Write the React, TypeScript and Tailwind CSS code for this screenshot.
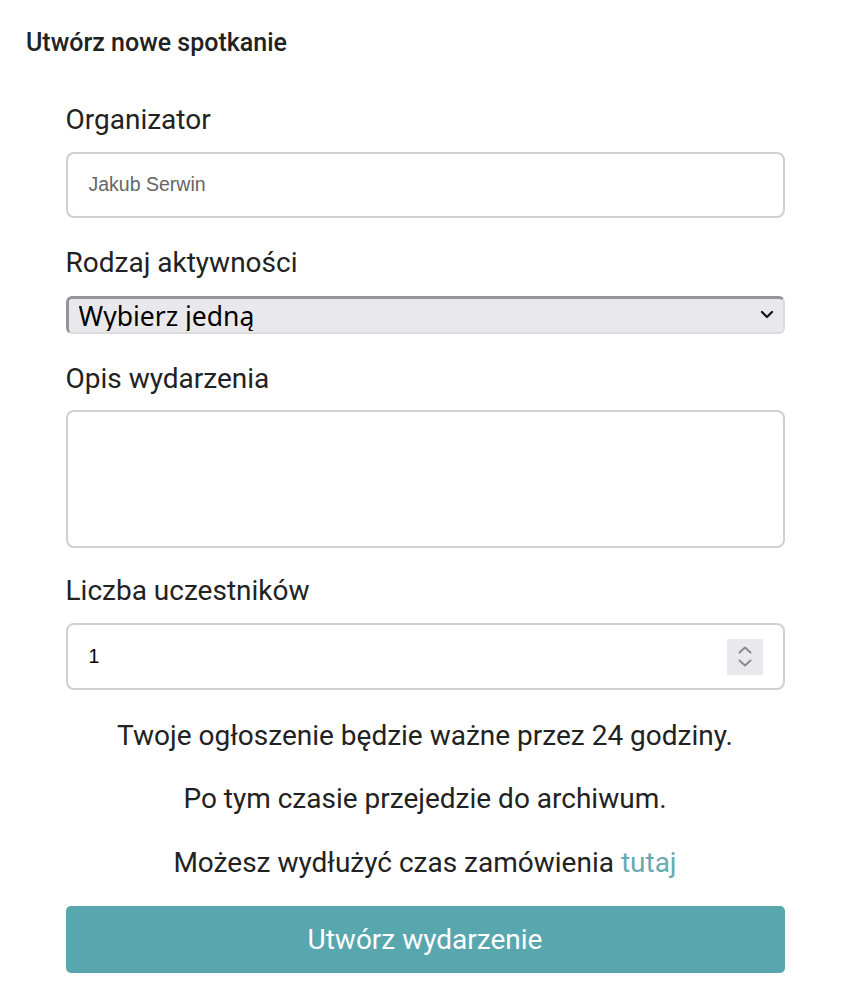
import React from "react";

const roboto = { fontFamily: "Roboto, 'Noto Sans', sans-serif" };

export default function App() {
  return (
    <div className="min-h-[1000px] w-[850px] bg-white px-[26px] pt-[29px] text-[#222]" style={roboto}>
      <h1 className="text-[25px] font-medium leading-[28px] text-[#222]">Utwórz nowe spotkanie</h1>
      <form className="mx-auto mt-[47px] flex w-[719px] flex-col" onSubmit={(e) => e.preventDefault()}>
        <label className="text-[28px] leading-[32px]">Organizator</label>
        <div className="mt-[16px] flex h-[66px] items-center rounded-[8px] border-2 border-[#d0d0d0] px-[21px]">
          <span className="text-[19.5px] text-[#666]" style={{ fontFamily: "'Liberation Sans', Arial, sans-serif" }}>
            Jakub Serwin
          </span>
        </div>

        <label className="mt-[29px] text-[28px] leading-[32px]">Rodzaj aktywności</label>
        <div className="relative mt-[17px] h-[38px]">
          <select
            className="h-full w-full appearance-none rounded-[6px] border-t-[3px] border-l-[3px] border-r-2 border-b-2 border-t-[#959595] border-l-[#959595] border-r-[#dcdcdc] border-b-[#dcdcdc] bg-[#e9e9ed] pl-[10px] text-[26.5px] leading-[30px] text-black outline-none"
            style={{ fontFamily: "'Noto Sans', sans-serif" }}
            defaultValue=""
          >
            <option value="">Wybierz jedną</option>
          </select>
          <svg className="pointer-events-none absolute right-[11px] top-[14px]" width="14" height="10" viewBox="0 0 14 10">
            <path d="M2 2 L7 7 L12 2" stroke="#111" strokeWidth="2.2" fill="none" strokeLinecap="round" strokeLinejoin="round" />
          </svg>
        </div>

        <label className="mt-[29px] text-[28px] leading-[32px]">Opis wydarzenia</label>
        <textarea className="mt-[15px] h-[138px] resize-none rounded-[8px] border-2 border-[#d0d0d0] outline-none" />

        <label className="mt-[27px] text-[28px] leading-[32px]">Liczba uczestników</label>
        <div className="mt-[16px] flex h-[67px] items-center justify-between rounded-[8px] border-2 border-[#d0d0d0] pl-[21px] pr-[20px]">
          <span className="text-[19.5px] text-black" style={{ fontFamily: "'Liberation Sans', Arial, sans-serif" }}>1</span>
          <div className="flex h-[36px] w-[36px] flex-col items-center justify-center gap-[5px] bg-[#e9e9ed]">
            <svg width="14" height="8" viewBox="0 0 14 8">
              <path d="M1.5 6.5 L7 1.5 L12.5 6.5" stroke="#8a8a8a" strokeWidth="2" fill="none" strokeLinecap="round" strokeLinejoin="round" />
            </svg>
            <svg width="14" height="8" viewBox="0 0 14 8">
              <path d="M1.5 1.5 L7 6.5 L12.5 1.5" stroke="#8a8a8a" strokeWidth="2" fill="none" strokeLinecap="round" strokeLinejoin="round" />
            </svg>
          </div>
        </div>

        <p className="mt-[30px] text-center text-[28px] leading-[32px]">Twoje ogłoszenie będzie ważne przez 24 godziny.</p>
        <p className="mt-[31px] text-center text-[28px] leading-[32px]">Po tym czasie przejedzie do archiwum.</p>
        <p className="mt-[32px] text-center text-[28px] leading-[32px]">
          Możesz wydłużyć czas zamówienia <a className="text-[#6aa9b0]" href="#">tutaj</a>
        </p>

        <button className="mt-[27px] h-[67px] rounded-[5px] bg-[#58a6ae] text-[28px] text-white" type="submit">
          Utwórz wydarzenie
        </button>
      </form>
    </div>
  );
}
